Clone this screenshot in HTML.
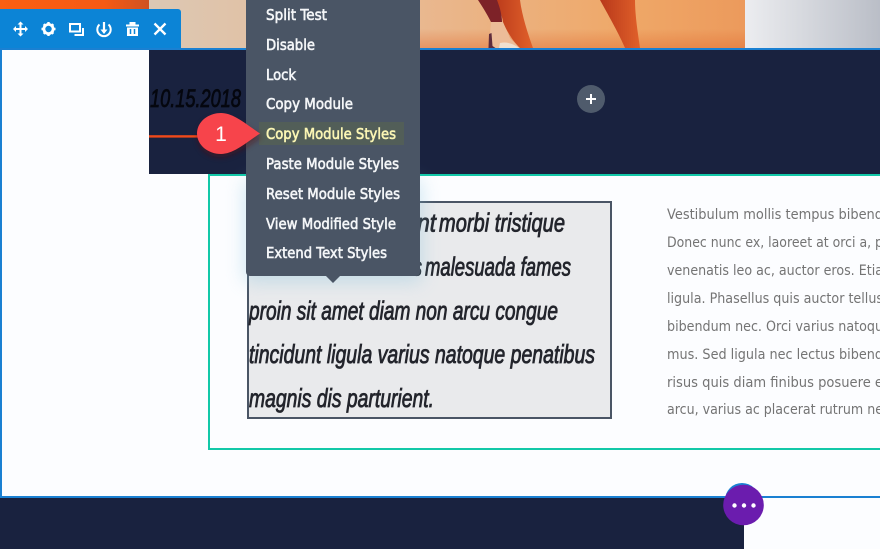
<!DOCTYPE html>
<html><head><meta charset="utf-8"><style>
html,body{margin:0;padding:0;background:#fcfdff;width:880px;height:549px;overflow:hidden}
svg{display:block}
.m{font-family:"DejaVu Sans",sans-serif;font-size:15px;fill:#f4f6f8;stroke:#f4f6f8;stroke-width:.6}
.q{font-family:"Liberation Sans",sans-serif;font-style:italic;font-size:26px;fill:#23252c;stroke:#23252c;stroke-width:.85}
.b{font-family:"DejaVu Sans",sans-serif;font-size:14.5px;fill:#747474}
</style></head><body>
<svg width="880" height="549" viewBox="0 0 880 549" xmlns="http://www.w3.org/2000/svg">
<defs>
<linearGradient id="o" x1="0" y1="0" x2="1" y2="0"><stop offset="0" stop-color="#fb5f12"/><stop offset=".7" stop-color="#f55a14"/><stop offset="1" stop-color="#cf5222"/></linearGradient>
<linearGradient id="p" x1="0" y1="0" x2="1" y2="0"><stop offset="0" stop-color="#dcc8b4"/><stop offset=".45" stop-color="#e9b890"/><stop offset=".8" stop-color="#efa868"/><stop offset="1" stop-color="#ec9a5c"/></linearGradient>
<linearGradient id="pv" x1="0" y1="0" x2="0" y2="1"><stop offset=".6" stop-color="#e06a30" stop-opacity="0"/><stop offset="1" stop-color="#e06a30" stop-opacity=".45"/></linearGradient>
<linearGradient id="g" x1="0" y1="0" x2="1" y2="0"><stop offset="0" stop-color="#ecedf0"/><stop offset="1" stop-color="#babec7"/></linearGradient>
<linearGradient id="leg" x1="0" y1="0" x2="1" y2="0"><stop offset="0" stop-color="#b8381a"/><stop offset="1" stop-color="#e0602a"/></linearGradient>
<filter id="sh" x="-20%" y="-20%" width="140%" height="140%"><feGaussianBlur stdDeviation="9"/></filter>
<filter id="s2" x="-30%" y="-30%" width="160%" height="160%"><feGaussianBlur stdDeviation="3"/></filter>
</defs>
<rect width="880" height="549" fill="#fcfdff"/>
<!-- top imagery -->
<rect x="0" y="0" width="149" height="48" fill="url(#o)"/>
<rect x="149" y="0" width="596" height="48" fill="url(#p)"/>
<rect x="420" y="0" width="325" height="48" fill="url(#pv)"/>
<rect x="745" y="0" width="135" height="48" fill="url(#g)"/>
<path d="M489 48 L490 33 L491 22 L503 22 L510 38 L520 48Z" fill="#ecbc98"/>
<path d="M489 34 l2.500 -1 l1 13 l3 2 h-7z" fill="#5f2c3c"/>
<path d="M500 43 q10 -2 19 5 h-20z" fill="#efe0d0"/>
<path d="M492 0 H520 C522 16 528 34 533 48 H520 C514 42 508 34 503 22 C502 14 498 6 492 0Z" fill="url(#leg)"/>
<path d="M478 0 H497 C500 8 502 15 502 22 L491 22 C487 14 482 6 478 0Z" fill="#7d2228"/>
<path d="M600 0 H635 C635 16 638 34 640 48 H625 C620 36 610 18 600 0Z" fill="url(#leg)"/>
<!-- navy band -->
<rect x="149" y="50" width="731" height="124" fill="#19223f"/>
<rect x="0" y="48" width="880" height="2" fill="#1a80d2"/>
<rect x="0" y="48" width="2" height="450" fill="#1a80d2"/>
<rect x="149" y="135.200" width="50" height="2.400" fill="#f0491a"/>
<text x="150" y="107" font-family="Liberation Sans,sans-serif" font-style="italic" font-size="25" fill="#05070f" stroke="#05070f" stroke-width=".8" textLength="91" lengthAdjust="spacingAndGlyphs">10.15.2018</text>
<!-- add button -->
<circle cx="591" cy="99" r="14" fill="#4f5b6c"/>
<path d="M586 99h10M591 94v10" stroke="#fff" stroke-width="2" fill="none"/>
<!-- green box -->
<rect x="209" y="175" width="690" height="274" fill="#fcfdff" stroke="#12c8a8" stroke-width="2"/>
<!-- quote box -->
<rect x="248" y="202" width="363" height="216" fill="#e9eaec" stroke="#4a5565" stroke-width="2"/>
<text class="q" x="405" y="231.500" textLength="31" lengthAdjust="spacingAndGlyphs">ant</text>
<text class="q" x="439" y="231.500" textLength="126" lengthAdjust="spacingAndGlyphs">morbi tristique</text>
<text class="q" x="413" y="275.500" textLength="9" lengthAdjust="spacingAndGlyphs">s</text>
<text class="q" x="425" y="275.500" textLength="146" lengthAdjust="spacingAndGlyphs">malesuada fames</text>
<text class="q" x="249" y="319.500" textLength="309" lengthAdjust="spacingAndGlyphs">proin sit amet diam non arcu congue</text>
<text class="q" x="249" y="363" textLength="346" lengthAdjust="spacingAndGlyphs">tincidunt ligula varius natoque penatibus</text>
<text class="q" x="249" y="407" textLength="185" lengthAdjust="spacingAndGlyphs">magnis dis parturient.</text>
<!-- body copy -->
<text class="b" x="667" y="219" textLength="216" lengthAdjust="spacingAndGlyphs">Vestibulum mollis tempus bibend</text>
<text class="b" x="667" y="247" textLength="216" lengthAdjust="spacingAndGlyphs">Donec nunc ex, laoreet at orci a, p</text>
<text class="b" x="667" y="275" textLength="216" lengthAdjust="spacingAndGlyphs">venenatis leo ac, auctor eros. Etia</text>
<text class="b" x="667" y="303" textLength="216" lengthAdjust="spacingAndGlyphs">ligula. Phasellus quis auctor tellus</text>
<text class="b" x="667" y="331" textLength="216" lengthAdjust="spacingAndGlyphs">bibendum nec. Orci varius natoqu</text>
<text class="b" x="667" y="359" textLength="216" lengthAdjust="spacingAndGlyphs">mus. Sed ligula nec lectus bibend</text>
<text class="b" x="667" y="387" textLength="216" lengthAdjust="spacingAndGlyphs">risus quis diam finibus posuere e</text>
<text class="b" x="667" y="414" textLength="216" lengthAdjust="spacingAndGlyphs">arcu, varius ac placerat rutrum ne</text>
<!-- bottom -->
<rect x="0" y="496" width="880" height="2" fill="#1a80d2"/>
<rect x="0" y="498" width="744" height="51" fill="#19223f"/>
<circle cx="742" cy="500" r="17" fill="#1a80d2"/>
<circle cx="743.500" cy="505" r="20.300" fill="#6b1cae"/>
<circle cx="734.500" cy="505.500" r="2.200" fill="#fff"/><circle cx="744" cy="505.500" r="2.200" fill="#fff"/><circle cx="753.500" cy="505.500" r="2.200" fill="#fff"/>
<!-- menu -->
<rect x="244" y="180" width="178" height="102" rx="6" fill="#7fc0dc" opacity=".35" filter="url(#sh)"/>
<path d="M246 -6H420V272a4 4 0 0 1 -4 4H340L333 283L326 276H250a4 4 0 0 1 -4 -4Z" fill="#4a5565"/>
<rect x="259" y="122" width="145" height="23" fill="#525e58"/>
<text class="m" x="266" y="20" textLength="61" lengthAdjust="spacingAndGlyphs">Split Test</text>
<text class="m" x="266" y="50" textLength="49" lengthAdjust="spacingAndGlyphs">Disable</text>
<text class="m" x="266" y="80" textLength="30" lengthAdjust="spacingAndGlyphs">Lock</text>
<text class="m" x="266" y="109" textLength="87" lengthAdjust="spacingAndGlyphs">Copy Module</text>
<text class="m" x="266" y="139" textLength="130" lengthAdjust="spacingAndGlyphs" style="fill:#fbf6b4;stroke:#fbf6b4">Copy Module Styles</text>
<text class="m" x="266" y="169" textLength="133" lengthAdjust="spacingAndGlyphs">Paste Module Styles</text>
<text class="m" x="266" y="199" textLength="134" lengthAdjust="spacingAndGlyphs">Reset Module Styles</text>
<text class="m" x="266" y="229" textLength="130" lengthAdjust="spacingAndGlyphs">View Modified Style</text>
<text class="m" x="266" y="258" textLength="121" lengthAdjust="spacingAndGlyphs">Extend Text Styles</text>
<!-- callout -->
<path d="M197 134 C197 122 208 113 222 114 C234 115 248 126 260 134 C248 142 234 152 222 154 C208 155 197 146 197 134Z" fill="#5a1010" opacity=".5" filter="url(#s2)" transform="translate(1,3)"/>
<path d="M197 133.500 C197 122 208 113 221 113 C234 113 247 125 260 133.500 C247 142 234 154 221 154 C208 154 197 145 197 133.500Z" fill="#f7444b"/>
<text x="221" y="141" text-anchor="middle" font-family="Liberation Sans,sans-serif" font-size="21" fill="#fff">1</text>
<!-- toolbar -->
<path d="M0 9H178a3 3 0 0 1 3 3V48H0Z" fill="#0c84d6"/>
<g fill="none" stroke="#fff" stroke-width="2">
<path d="M14 29h13M20.500 22.500v13"/>
<path fill="#fff" stroke="none" d="M20.500 21.500l3 3h-6zM20.500 36.500l-3 -3h6zM13 29l3 -3v6zM28 29l-3 -3v6z"/>
<circle cx="48.500" cy="29" r="4.600" stroke-width="2.800"/>
<path stroke-width="2.400" d="M48.500 22v2.500M48.500 33.500v2.500M41.500 29h2.500M53 29h2.500M43.700 24.200l1.700 1.700M51.600 32.100l1.700 1.700M43.700 33.800l1.700 -1.700M51.600 25.900l1.700 -1.700"/>
<rect x="70" y="24" width="10" height="7.500" stroke-width="2"/>
<path d="M74.500 35h8.500v-7" stroke-width="2"/>
<path d="M99.500 24.500a6.700 6.700 0 1 0 9 0" stroke-width="2"/>
<path d="M104 22v10" stroke-width="2.200"/>
<path fill="#fff" stroke="none" d="M100.500 29.500h7l-3.500 4.500z"/>
<path stroke-width="2" d="M126 25.500h13"/>
<path stroke="none" fill="#fff" d="M129.500 22h6v3h-6zM127 27.500h11V36h-11z"/>
<path stroke="#0c84d6" stroke-width="1.500" d="M130.500 29v5M134.500 29v5"/>
<path stroke-width="2.300" d="M154.500 23.500l11 11M165.500 23.500l-11 11"/>
</g>
</svg>
</body></html>
